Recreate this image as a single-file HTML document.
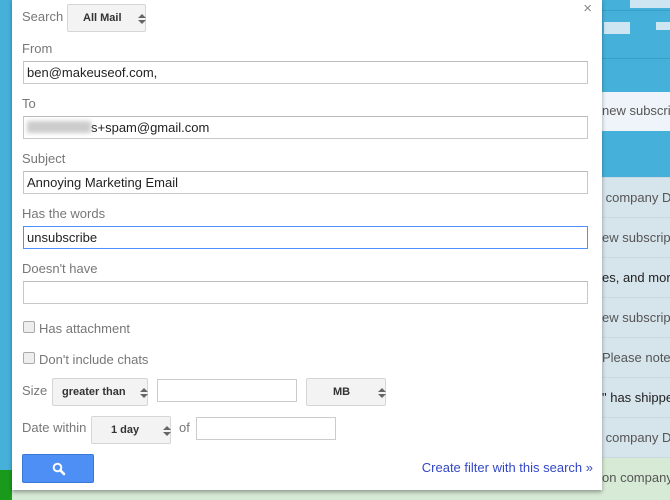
<!DOCTYPE html>
<html><head><style>
body{margin:0;width:670px;height:500px;overflow:hidden;position:relative;font-family:"Liberation Sans",Arial,sans-serif;background:#d6e4ec}
.bg{position:absolute;left:0;top:0;width:670px;height:500px}
.row{position:absolute;left:602px;width:68px;height:40px;border-top:1px solid #c9d8e1;font-size:13px;color:#555;line-height:40px;white-space:nowrap;overflow:hidden}
.dlg{position:absolute;left:12px;top:-2px;width:590px;height:492px;background:#fff;box-shadow:0 2px 4px rgba(0,0,0,.35)}
.lbl{position:absolute;left:10px;font-size:13px;color:#777}
.inp{position:absolute;left:11px;width:565px;height:23px;border:1px solid #c8c8c8;border-top-color:#bbb;font-size:13px;color:#222;line-height:21px;padding-left:3px;box-sizing:border-box}
.sel{position:absolute;height:28px;border:1px solid #d6d6d6;background:#f3f3f3;border-radius:2px;font-size:11px;font-weight:bold;color:#333;line-height:26px;box-sizing:border-box}
.arr{position:absolute;right:7px;top:9px;width:0;height:0}
.arr:before{content:"";position:absolute;left:0;top:0;border:4px solid transparent;border-bottom:4px solid #666;border-top:0}
.arr:after{content:"";position:absolute;left:0;top:6px;border:4px solid transparent;border-top:4px solid #666;border-bottom:0}
.cb{position:absolute;left:11px;width:12px;height:12px;border:1px solid #aaa;border-radius:2px;background:#eee;box-sizing:border-box}
.tb{position:absolute;height:21px;border:1px solid #ccc;box-sizing:border-box}
</style></head><body>
<div class="bg">
 <div style="position:absolute;left:0;top:0;width:670px;height:92px;background:#45b1da"></div>
 <div style="position:absolute;left:602px;top:10px;width:68px;height:1px;background:#3a9fc6"></div>
 <div style="position:absolute;left:602px;top:58px;width:68px;height:1px;background:#3a9fc6"></div>
 <div style="position:absolute;left:630px;top:0;width:40px;height:8px;background:#cde6f2"></div>
 <div style="position:absolute;left:604px;top:22px;width:26px;height:12px;background:#cde6f2"></div>
 <div style="position:absolute;left:656px;top:22px;width:14px;height:8px;background:#cde6f2"></div>
 <div style="position:absolute;left:602px;top:92px;width:68px;height:39px;background:#eef4f9;font-size:13px;color:#555;line-height:38px;white-space:nowrap;overflow:hidden">new subscrip</div>
 <div style="position:absolute;left:602px;top:131px;width:68px;height:47px;background:#45b1da"></div>
 <div style="position:absolute;left:0;top:0;width:12px;height:470px;background:#45b1da"></div>
 <div style="position:absolute;left:0;top:470px;width:12px;height:30px;background:#1a9a1a"></div>
 <div style="position:absolute;left:12px;top:490px;width:658px;height:10px;background:#d7ead5"></div>
 <div class="row" style="top:177px">&nbsp;company D</div>
 <div class="row" style="top:217px">ew subscript</div>
 <div class="row" style="top:257px;color:#222">es, and more</div>
 <div class="row" style="top:297px">ew subscript</div>
 <div class="row" style="top:337px">Please note</div>
 <div class="row" style="top:377px;color:#222">" has shippe</div>
 <div class="row" style="top:417px">&nbsp;company D</div>
 <div class="row" style="top:457px;background:#d7ead5">on company</div>
</div>
<div class="dlg">
 <div style="position:absolute;right:10px;top:2px;font-size:15px;color:#888">×</div>
 <div class="lbl" style="top:11px">Search</div>
 <div class="sel" style="left:55px;top:6px;width:79px;padding-left:15px">All Mail<span class="arr"></span></div>
 <div class="lbl" style="top:43px">From</div>
 <div class="inp" style="top:63px">ben@makeuseof.com,</div>
 <div class="lbl" style="top:98px">To</div>
 <div class="inp" style="top:118px"><span style="display:inline-block;width:64px;height:12px;background:#ccc;filter:blur(2px);vertical-align:-1px"></span>s+spam@gmail.com</div>
 <div class="lbl" style="top:153px">Subject</div>
 <div class="inp" style="top:173px">Annoying Marketing Email</div>
 <div class="lbl" style="top:208px">Has the words</div>
 <div class="inp" style="top:228px;border-color:#4d90fe">unsubscribe</div>
 <div class="lbl" style="top:263px">Doesn't have</div>
 <div class="inp" style="top:283px"></div>
 <div class="cb" style="top:323px"></div><div class="lbl" style="left:27px;top:323px">Has attachment</div>
 <div class="cb" style="top:354px"></div><div class="lbl" style="left:27px;top:354px">Don't include chats</div>
 <div class="lbl" style="top:385px">Size</div>
 <div class="sel" style="left:40px;top:380px;width:96px;padding-left:9px">greater than<span class="arr"></span></div>
 <div class="tb" style="left:145px;top:381px;width:140px;height:23px"></div>
 <div class="sel" style="left:294px;top:380px;width:80px;padding-left:26px">MB<span class="arr"></span></div>
 <div class="lbl" style="top:422px">Date within</div>
 <div class="sel" style="left:79px;top:418px;width:80px;padding-left:19px">1 day<span class="arr"></span></div>
 <div class="lbl" style="left:167px;top:422px">of</div>
 <div class="tb" style="left:184px;top:419px;width:140px;height:23px"></div>
 <div style="position:absolute;left:10px;top:456px;width:72px;height:29px;background:#4d8ff5;border:1px solid #3a78d8;border-radius:2px;box-sizing:border-box">
  <svg width="14" height="14" viewBox="0 0 14 14" style="position:absolute;left:29px;top:7px"><circle cx="5.5" cy="5.5" r="3.8" stroke="#fff" stroke-width="2" fill="none"/><path d="M8.3 8.3L12 12" stroke="#fff" stroke-width="2.6" stroke-linecap="round"/></svg>
 </div>
 <div style="position:absolute;right:9px;top:462px;font-size:13px;color:#3348c6">Create filter with this search »</div>
</div>
</body></html>
